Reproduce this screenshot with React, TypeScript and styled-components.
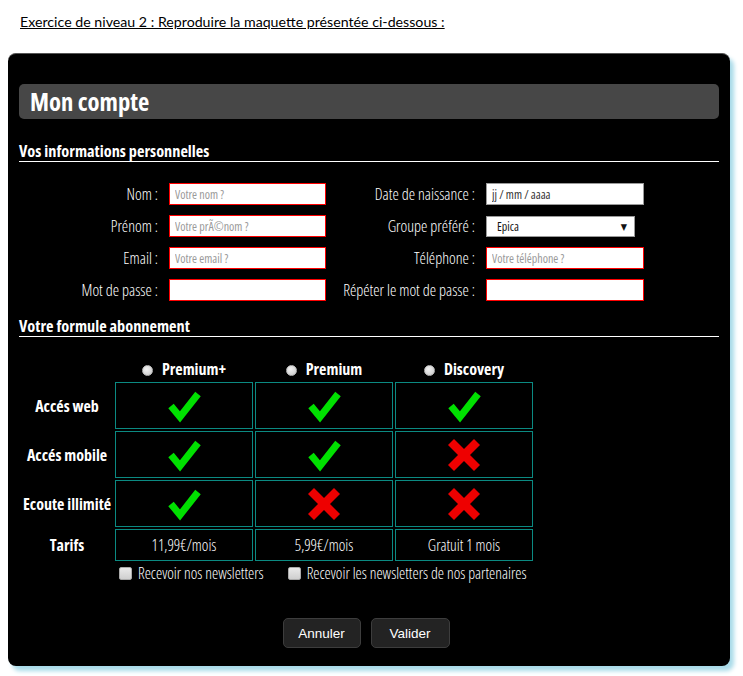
import React from "react";
import styled, { createGlobalStyle } from "styled-components";

const Global = createGlobalStyle`
  html, body { margin: 0; padding: 0; background: #fff; }
  * { box-sizing: border-box; }
`;

const COND = `"Open Sans", "DejaVu Sans Condensed", sans-serif`;

const Page = styled.div`
  padding: 13px 0 0 8px;
  width: 743px;
  min-height: 676px;
`;

const Intro = styled.p`
  margin: 0 0 22px 12px;
  font-family: Lato, "Open Sans", sans-serif;
  font-size: 14.2px;
  line-height: 18px;
  color: #000;
  text-decoration: underline;
`;

const Card = styled.div`
  width: 722px;
  background: #000;
  border-top: 1px solid #555;
  border-radius: 8px;
  padding: 30px 11px 18px 11px;
  box-shadow: 4px 5px 4px #a9dbe9;
  font-family: ${COND};
  font-stretch: 75%;
  color: #fff;
`;

const TitleBar = styled.h1`
  margin: 0;
  height: 35px;
  line-height: 35px;
  padding-left: 11px;
  background: #474747;
  border-radius: 5px;
  font-size: 24.6px;
  font-weight: 700;
  color: #fff;
`;

const SectionTitle = styled.h2<{ $top: number }>`
  margin: ${(p) => p.$top}px 0 0 0;
  font-size: 16.3px;
  line-height: 18px;
  font-weight: 700;
  padding-bottom: 1px;
  border-bottom: 1px solid #fff;
`;

const FormGrid = styled.div`
  margin-top: 21px;
  display: grid;
  grid-template-columns: 150px 157px 160px 158px;
  grid-auto-rows: 22px;
  row-gap: 10px;
  align-items: center;
`;

const Label = styled.label`
  text-align: right;
  padding-right: 11px;
  font-size: 16px;
  line-height: 20px;
  font-weight: 300;
  white-space: nowrap;
`;

const TextInput = styled.input<{ $plain?: boolean }>`
  width: 100%;
  height: 22px;
  border: 1px solid ${(p) => (p.$plain ? "#9a9a9a" : "#ff0000")};
  background: #fff;
  padding: 0 5px;
  font-family: ${COND};
  font-stretch: 75%;
  font-size: 12px;
  font-weight: 400;
  color: #333;
  outline: none;
  &::placeholder { color: #9a9a9a; }
`;

const Select = styled.div`
  width: 149px;
  height: 21px;
  border: 1px solid #9a9a9a;
  background: #fff;
  display: flex;
  align-items: center;
  justify-content: space-between;
  padding: 0 7px 0 10px;
  color: #111;
  font-size: 12px;
  span:last-child { font-size: 9px; }
`;

const Table = styled.table`
  margin-top: 19px;
  border-collapse: separate;
  border-spacing: 2px;
  table-layout: fixed;
  margin-left: 0;
`;

const HeadCell = styled.th`
  height: 22px;
  padding: 0;
  font-size: 16px;
  font-weight: 700;
  text-align: center;
  white-space: nowrap;
`;

const RowLabel = styled.th`
  width: 92px;
  padding: 0;
  font-size: 16px;
  font-weight: 700;
  text-align: center;
  white-space: nowrap;
`;

const Cell = styled.td<{ $h: number }>`
  width: 138px;
  height: ${(p) => p.$h}px;
  border: 1px solid #0b8a82;
  padding: 0;
  text-align: center;
  vertical-align: middle;
  font-size: 15.7px;
  font-weight: 300;
`;

const Radio = styled.input`
  appearance: none;
  width: 11px;
  height: 11px;
  border-radius: 50%;
  margin: 0 9px 0 0;
  vertical-align: -1px;
  background: radial-gradient(circle at 40% 35%, #f2f2f2, #c8c8c8);
  border: 1px solid #b8b8b8;
`;

const Checks = styled.div`
  display: flex;
  align-items: center;
  font-size: 15.7px;
  font-weight: 300;
  height: 20px;
`;

const CheckBox = styled.input`
  appearance: none;
  width: 13px;
  height: 13px;
  margin: 0 6px 0 4px;
  background: linear-gradient(#eaeaea, #cfcfcf);
  border: 1px solid #aaa;
  border-radius: 2px;
`;

const CheckLabel = styled.label<{ $gap?: number }>`
  margin-right: ${(p) => p.$gap ?? 0}px;
  white-space: nowrap;
`;

const Buttons = styled.div`
  margin-top: 33px;
  display: flex;
  justify-content: center;
  gap: 10px;
  padding-right: 6px;
`;

const Button = styled.button<{ $w: number }>`
  width: ${(p) => p.$w}px;
  height: 30px;
  background: #232323;
  border: 1px solid #3d3d3d;
  border-radius: 5px;
  color: #fff;
  font-family: "Liberation Sans", Arial, sans-serif;
  font-size: 13.5px;
  font-weight: 400;
`;

const Check = () => (
  <svg width="34" height="34" viewBox="0 0 34 34" style={{ display: "block", margin: "0 auto" }}>
    <polyline points="4,17 13,28 31,5" fill="none" stroke="#00e000" strokeWidth="7" strokeLinejoin="miter" strokeLinecap="butt" />
  </svg>
);

const Cross = () => (
  <svg width="34" height="34" viewBox="0 0 34 34" style={{ display: "block", margin: "0 auto" }}>
    <line x1="4" y1="4" x2="30" y2="30" stroke="#ee0000" strokeWidth="8.5" />
    <line x1="30" y1="4" x2="4" y2="30" stroke="#ee0000" strokeWidth="8.5" />
  </svg>
);

type Mark = "y" | "n";
const rows: { label: string; marks: Mark[] }[] = [
  { label: "Accés web", marks: ["y", "y", "y"] },
  { label: "Accés mobile", marks: ["y", "y", "n"] },
  { label: "Ecoute illimité", marks: ["y", "n", "n"] },
];

export default function App() {
  return (
    <>
      <Global />
      <Page>
        <Intro>Exercice de niveau 2 : Reproduire la maquette présentée ci-dessous :</Intro>
        <Card>
          <TitleBar>Mon compte</TitleBar>
          <SectionTitle $top={23}>Vos informations personnelles</SectionTitle>
          <FormGrid>
            <Label>Nom :</Label>
            <TextInput placeholder="Votre nom ?" />
            <Label>Date de naissance :</Label>
            <TextInput $plain readOnly defaultValue="jj / mm / aaaa" />

            <Label>Prénom :</Label>
            <TextInput placeholder="Votre prÃ©nom ?" />
            <Label>Groupe préféré :</Label>
            <Select>
              <span>Epica</span>
              <span>▼</span>
            </Select>

            <Label>Email :</Label>
            <TextInput placeholder="Votre email ?" />
            <Label>Téléphone :</Label>
            <TextInput placeholder="Votre téléphone ?" />

            <Label>Mot de passe :</Label>
            <TextInput type="password" />
            <Label>Répéter le mot de passe :</Label>
            <TextInput type="password" />
          </FormGrid>

          <SectionTitle $top={16}>Votre formule abonnement</SectionTitle>
          <Table>
            <thead>
              <tr>
                <HeadCell />
                <HeadCell><Radio type="radio" name="f" />Premium+</HeadCell>
                <HeadCell><Radio type="radio" name="f" />Premium</HeadCell>
                <HeadCell><Radio type="radio" name="f" />Discovery</HeadCell>
              </tr>
            </thead>
            <tbody>
              {rows.map((r) => (
                <tr key={r.label}>
                  <RowLabel>{r.label}</RowLabel>
                  {r.marks.map((m, i) => (
                    <Cell key={i} $h={47}>{m === "y" ? <Check /> : <Cross />}</Cell>
                  ))}
                </tr>
              ))}
              <tr>
                <RowLabel>Tarifs</RowLabel>
                <Cell $h={32}>11,99€/mois</Cell>
                <Cell $h={32}>5,99€/mois</Cell>
                <Cell $h={32}>Gratuit 1 mois</Cell>
              </tr>
              <tr>
                <td />
                <td colSpan={3} style={{ padding: 0 }}>
                  <Checks>
                    <CheckBox type="checkbox" />
                    <CheckLabel $gap={20}>Recevoir nos newsletters</CheckLabel>
                    <CheckBox type="checkbox" />
                    <CheckLabel>Recevoir les newsletters de nos partenaires</CheckLabel>
                  </Checks>
                </td>
              </tr>
            </tbody>
          </Table>
          <Buttons>
            <Button $w={78}>Annuler</Button>
            <Button $w={79}>Valider</Button>
          </Buttons>
        </Card>
      </Page>
    </>
  );
}
